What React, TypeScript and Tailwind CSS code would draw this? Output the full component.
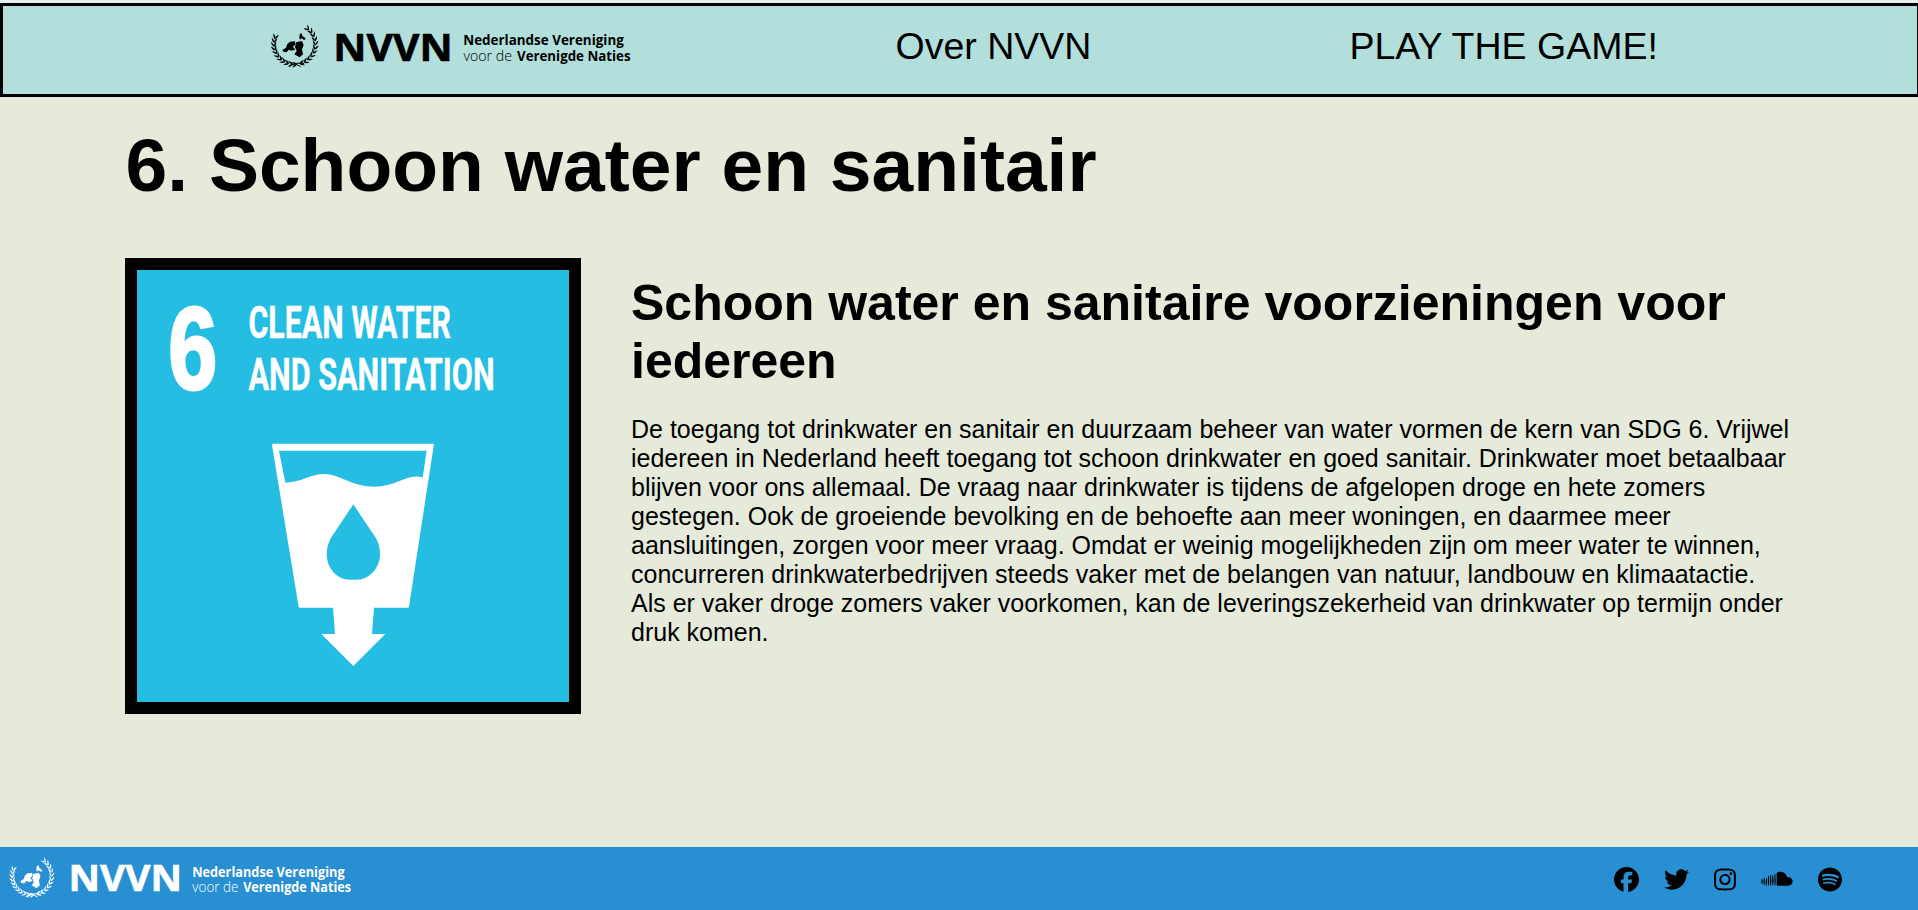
import React from 'react';
import { FaFacebook, FaTwitter, FaInstagram, FaSoundcloud, FaSpotify } from 'react-icons/fa6';

const LEAF = 'M-1 0 Q6 -5 17 0 Q6 5 -1 0 Z';

function Branch({ from, to, dir }: { from: number; to: number; dir: 1 | -1 }) {
  const leaves: React.ReactElement[] = [];
  const count = 11;
  for (let i = 0; i < count; i++) {
    const deg = from + ((to - from) * i) / (count - 1);
    const rad = (deg * Math.PI) / 180;
    const x = 104 + 62 * Math.cos(rad);
    const y = 88 + 60 * Math.sin(rad);
    const tangent = deg + 90 * dir;
    leaves.push(
      <g key={i} transform={`translate(${x.toFixed(1)} ${y.toFixed(1)})`}>
        <path d={LEAF} transform={`rotate(${tangent + 29})`} />
        <path d={LEAF} transform={`rotate(${tangent - 29})`} />
      </g>,
    );
  }
  return <g>{leaves}</g>;
}

function Logo({ className }: { className: string }) {
  return (
    <svg viewBox="0 0 370 60" className={className} fill="currentColor" role="img" aria-label="NVVN">
      <g transform="translate(-5 0) scale(0.33333)">
        <Branch from={84} to={196} dir={1} />
        <Branch from={76} to={-46} dir={-1} />
        <path d="M88 155 Q108 140 132 146 M122 155 Q108 143 92 147" fill="none" stroke="currentColor" strokeWidth="3" />
        <path d="M67 105 L78 98 L82 87 L90 80 L105 79 L106 88 L99 95 L106 104 L94 107 L86 104 L80 112 L70 110 Z" />
        <path d="M108 82 L126 78 L131 90 L126 103 L129 118 L119 127 L103 118 L110 108 L105 96 Z" />
        <path d="M118 60 L124 54 L128 64 L137 70 L133 76 L125 70 L119 74 Z" />
      </g>
      <text x="68.2" y="45.7" fontFamily="'Open Sans', 'Noto Sans', sans-serif" fontWeight="700" fontSize="37.6" textLength="119.5" lengthAdjust="spacingAndGlyphs" stroke="currentColor" strokeWidth="0.6">NVVN</text>
      <g fontFamily="'Open Sans', 'Noto Sans', sans-serif" fontSize="14.8" fontWeight="700">
        <text x="198.3" y="30.3" textLength="160.5" lengthAdjust="spacingAndGlyphs">Nederlandse Vereniging</text>
        <text x="198.5" y="46" fontWeight="300" textLength="48.5" lengthAdjust="spacingAndGlyphs">voor de</text>
        <text x="252" y="46" textLength="113.5" lengthAdjust="spacingAndGlyphs">Verenigde Naties</text>
      </g>
    </svg>
  );
}

function WaterGoal() {
  return (
    <svg viewBox="0 0 432 432" className="h-full w-full" fill="white">
      <text transform="translate(31.3 119) scale(0.76 1)" fontFamily="'Liberation Sans', Arial, sans-serif" fontSize="116" fontWeight="700" stroke="white" strokeWidth="3">6</text>
      <g fontFamily="Roboto, 'Liberation Sans', sans-serif" fontWeight="700" fontSize="44" stroke="white" strokeWidth="0.4">
        <text x="111.5" y="68.3" textLength="202.5" lengthAdjust="spacingAndGlyphs">CLEAN WATER</text>
        <text x="111.5" y="119.8" textLength="246" lengthAdjust="spacingAndGlyphs">AND SANITATION</text>
      </g>
      <path
        fillRule="evenodd"
        d="M136 173.7 H296 Q297 173.7 296.8 175 L272 336.5 Q271.8 337.8 270.8 337.8 H237 L235 364 H248.3 L216.3 396 L184.3 364 H198 L196 337.8 H163 Q161.8 337.8 161.6 336.5 L135 175 Q135 173.7 136 173.7 Z M142 180.7 L148.3 212.7 C165 212 174 204 187 204 C203 204 214 216.7 238 216.7 C259 216.7 271 203 285.7 207.5 L289.6 180.7 Z"
      />
      <path fill="#26bde2" d="M216.3 234.3 L238.5 267.5 C241 271.5 243 277 243 284.5 C243 298 232 309.7 220 309.7 H212.5 C200 309.7 189.7 298 189.7 284.5 C189.7 277 192 271.5 194.5 267 Z" />
    </svg>
  );
}

export default function App() {
  return (
    <div className="flex h-[910px] w-full flex-col overflow-hidden bg-[#e5eadb] font-['Liberation_Sans',Arial,sans-serif] text-black">
      <div className="h-[3px] shrink-0 bg-[#e6f0ef]" />
      <header className="flex h-[94px] shrink-0 items-start border-[3px] border-r border-black bg-[#b2dfdb] text-[37.5px] leading-[43px]">
        <a href="#" className="ml-[262px] mt-[9px]">
          <Logo className="h-[60px] w-[370px]" />
        </a>
        <a href="#" className="ml-[260.5px] mt-[18.5px] whitespace-nowrap">Over NVVN</a>
        <a href="#" className="ml-[258px] mt-[18.5px] whitespace-nowrap">PLAY THE GAME!</a>
      </header>

      <main className="grow pl-[125px] pt-[25px]">
        <h1 className="pl-[0.5px] text-[75px] font-bold leading-[86px]">6. Schoon water en sanitair</h1>
        <div className="mt-[50px] flex items-start gap-[50px]">
          <div className="h-[456px] w-[456px] shrink-0 border-[12px] border-black bg-[#26bde2]">
            <WaterGoal />
          </div>
          <section className="w-[1161px] pt-4">
            <h2 className="text-[50px] font-bold leading-[58px]">Schoon water en sanitaire voorzieningen voor iedereen</h2>
            <p className="mt-[25px] text-[25px] leading-[29px]">
              De toegang tot drinkwater en sanitair en duurzaam beheer van water vormen de kern van SDG 6. Vrijwel
              iedereen in Nederland heeft toegang tot schoon drinkwater en goed sanitair. Drinkwater moet betaalbaar
              blijven voor ons allemaal. De vraag naar drinkwater is tijdens de afgelopen droge en hete zomers
              gestegen. Ook de groeiende bevolking en de behoefte aan meer woningen, en daarmee meer
              aansluitingen, zorgen voor meer vraag. Omdat er weinig mogelijkheden zijn om meer water te winnen,
              concurreren drinkwaterbedrijven steeds vaker met de belangen van natuur, landbouw en klimaatactie.
              Als er vaker droge zomers vaker voorkomen, kan de leveringszekerheid van drinkwater op termijn onder
              druk komen.
            </p>
          </section>
        </div>
      </main>

      <footer className="flex h-[63px] shrink-0 items-start justify-between bg-[#288fd3] pl-[3px] pr-[76px]">
        <Logo className="mt-px h-[57px] w-[353px] text-white" />
        <div className="flex items-center gap-[25px] pt-5">
          <FaFacebook className="h-[25px] w-[25px]" />
          <FaTwitter className="h-[25px] w-[25px]" />
          <FaInstagram className="h-[25px] w-[22px]" />
          <FaSoundcloud className="h-[25px] w-8" />
          <FaSpotify className="h-[25px] w-[24px]" />
        </div>
      </footer>
    </div>
  );
}
